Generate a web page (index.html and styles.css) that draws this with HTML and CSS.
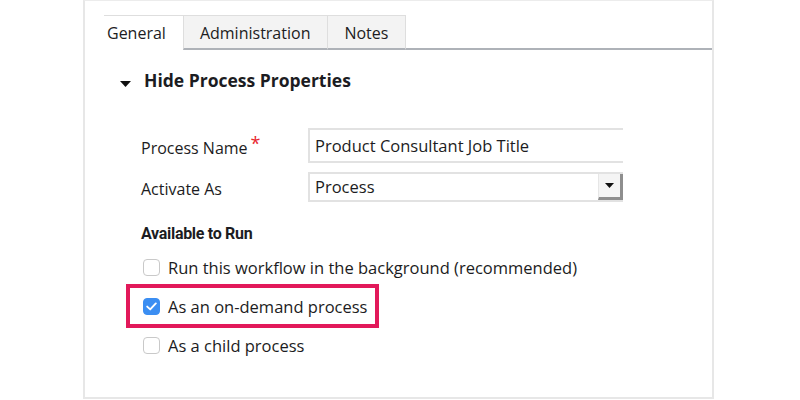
FILE: index.html
```html
<!DOCTYPE html>
<html>
<head>
<meta charset="utf-8">
<link rel="stylesheet" href="styles.css">
</head>
<body>
<div class="panel">
  <div class="tabs">
    <div class="tab active">General</div>
    <div class="tab">Administration</div>
    <div class="tab">Notes</div>
    <div class="tab-fill"></div>
  </div>
  <div class="section-head">
    <svg class="caret" width="11" height="6" viewBox="0 0 11 6"><path d="M0 0 H11 L5.5 6 Z" fill="#111"/></svg>
    <span>Hide Process Properties</span>
  </div>
  <div class="form">
    <div class="row">
      <label class="label">Process Name<span class="req">*</span></label>
      <div class="input">Product Consultant Job Title</div>
    </div>
    <div class="row row-select">
      <label class="label">Activate As</label>
      <div class="select">
        <span class="select-text">Process</span>
        <span class="select-btn"><svg width="9" height="5" viewBox="0 0 9 5"><path d="M0 0 H9 L4.5 5 Z" fill="#111"/></svg></span>
      </div>
    </div>
    <div class="subhead">Available to Run</div>
    <div class="checks">
      <div class="check"><span class="box"></span><span>Run this workflow in the background (recommended)</span></div>
      <div class="check highlighted"><span class="box checked"><svg width="11" height="9" viewBox="0 0 11 9"><path d="M1.2 4.6 L4.2 7.4 L9.8 1.4" fill="none" stroke="#fff" stroke-width="1.9" stroke-linecap="round" stroke-linejoin="round"/></svg></span><span>As an on-demand process</span></div>
      <div class="check"><span class="box"></span><span>As a child process</span></div>
    </div>
  </div>
</div>
</body>
</html>
```

FILE: styles.css
```css
html, body { margin: 0; padding: 0; background: #fff; }
body {
  font-family: "Open Sans", "Noto Sans", sans-serif;
  color: #1c1c22;
  width: 800px;
  height: 400px;
  overflow: hidden;
}
.panel {
  margin-left: 83px;
  width: 631px;
  height: 399px;
  box-sizing: border-box;
  border: 2px solid #e7e7e7;
  border-top: 1px solid #ececec;
  padding: 14px 0 0 19px;
}
.tabs {
  display: flex;
  height: 35px;
}
.tab {
  font-size: 16px;
  line-height: 34px;
  padding: 0 17px 0 16px;
  background: #f3f3f3;
  border-top: 1px solid #dedede;
  border-left: 1px solid #dedede;
  border-bottom: 2px solid #aeb2b8;
  box-sizing: border-box;
}
.tab:nth-child(3) { border-right: 1px solid #dedede; }
.tab.active {
  background: #fff;
  border-left: none;
  border-bottom: 2px solid transparent;
  padding: 0 17px 0 3px;
}
.tab-fill {
  flex: 1;
  border-bottom: 2px solid #aeb2b8;
}
.section-head {
  display: flex;
  align-items: center;
  margin-top: 18px;
  margin-left: 16px;
  font-size: 17.5px;
  font-weight: 700;
  height: 24px;
}
.caret { margin-right: 13px; margin-top: 8px; }
.form { padding-left: 37px; margin-top: 36px; }
.row {
  display: flex;
  align-items: center;
  height: 35px;
}
.row-select { margin-top: 9px; height: 30px; }
.label {
  width: 167px;
  font-size: 16px;
  padding-top: 3px;
}
.req { color: #e8262f; margin-left: 3px; font-size: 18px; position: relative; top: -4px; }
.input {
  flex: 1;
  height: 35px;
  box-sizing: border-box;
  border: 2px solid #e2e2e2;
  border-right: none;
  font-size: 16.5px;
  line-height: 31px;
  padding-left: 5px;
  margin-right: 89px;
}
.select {
  flex: 1;
  display: flex;
  height: 30px;
  box-sizing: border-box;
  border: 2px solid #e2e2e2;
  border-right: none;
  margin-right: 89px;
}
.select-text {
  flex: 1;
  font-size: 16.5px;
  line-height: 26px;
  padding-left: 5px;
}
.select-btn {
  width: 25px;
  box-sizing: border-box;
  background: #f4f4f4;
  border-left: 1px solid #e6e6e6;
  border-right: 3px solid #8e8e8e;
  border-bottom: 3px solid #8e8e8e;
  display: flex;
  align-items: center;
  justify-content: center;
}
.subhead {
  font-family: Roboto, "Open Sans", sans-serif;
  font-size: 16px;
  letter-spacing: -0.3px;
  font-weight: 700;
  margin-top: 22px;
  height: 23px;
}
.checks { margin-top: 1px; display: flex; flex-direction: column; }
.check {
  display: flex;
  align-items: center;
  font-size: 16.5px;
  height: 39px;
  gap: 8px;
  padding-left: 2px;
}
.check.highlighted {
  align-self: flex-start;
  outline: 4px solid #e2195a;
  outline-offset: 3px;
  height: 30px;
  margin: 4px 0 5px 0;
  padding-right: 5px;
  margin-left: -8px;
  padding-left: 10px;
}
.box {
  width: 17px;
  height: 17px;
  box-sizing: border-box;
  border: 1.5px solid #c9c9c9;
  border-radius: 4px;
  background: #fff;
  display: flex;
  align-items: center;
  justify-content: center;
}
.box.checked {
  background: #3b8ef2;
  border-color: #3b8ef2;
}
```
